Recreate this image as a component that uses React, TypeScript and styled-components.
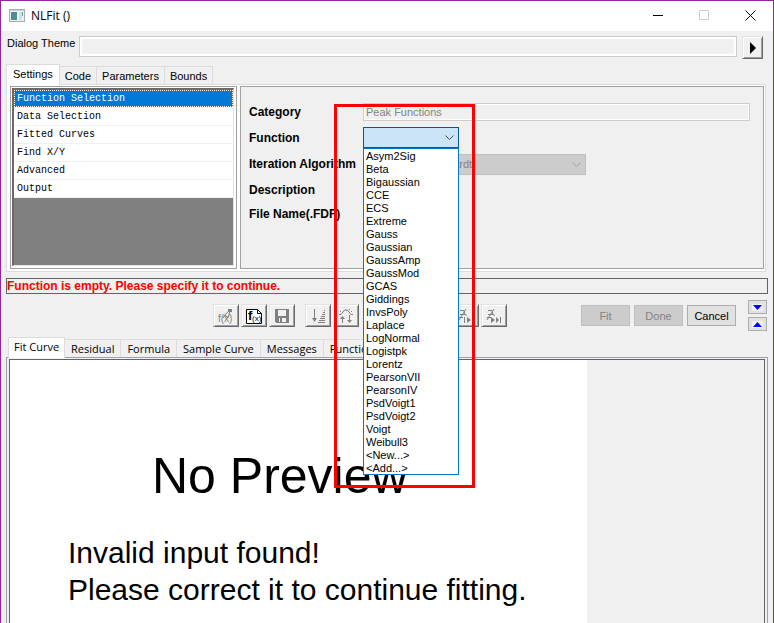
import React, { useState } from 'react';
import styled, { createGlobalStyle, css } from 'styled-components';

const GlobalStyle = createGlobalStyle`
  * { box-sizing: border-box; }
  body {
    margin: 0;
    background: #f0f0f0;
    overflow: hidden;
  }
  button, input, select {
    font: inherit;
    color: inherit;
    margin: 0;
    padding: 0;
    border-radius: 0;
  }
  ul { margin: 0; padding: 0; list-style: none; }
`;

const Window = styled.main`
  display: flex;
  flex-direction: column;
  min-height: 100vh;
  border: 1px solid #90279a;
  border-bottom: 0;
  background: #f0f0f0;
  color: #000;
  font: 11px/14px 'Liberation Sans', Arial, sans-serif;
`;

const TitleBar = styled.header`
  display: flex;
  align-items: center;
  height: 30px;
  padding: 0 11px 0 8px;
  background: #fff;
`;

const Title = styled.h1`
  flex: 1;
  margin: 0 0 0 6px;
  font: 12px/16px 'Open Sans', 'Noto Sans', sans-serif;
`;

const WindowButtons = styled.div`
  display: flex;
  gap: 23px;
`;

const WindowButton = styled.button`
  display: grid;
  place-items: center;
  width: 23px;
  height: 26px;
  padding-bottom: 2px;
  border: 0;
  background: none;
`;

const ThemeRow = styled.div`
  display: flex;
  align-items: flex-start;
  padding: 5px 10px 5px 6px;
`;

const ThemeLabel = styled.label`
  width: 72px;
  white-space: nowrap;
`;

const readOnlyBox = css`
  border: 1px solid #ccc;
  background: #f0f0f0;
  box-shadow: inset 0 0 0 1px #fff;
`;

const ThemeInput = styled.input`
  ${readOnlyBox}
  flex: 1;
  min-width: 0;
  height: 21px;
  box-shadow: inset 0 0 0 2px #fff;
`;

const raised = css`
  display: grid;
  place-items: center;
  border: 1px solid;
  border-color: #e3e3e3 #696969 #696969 #e3e3e3;
  background: #f0f0f0;
  box-shadow: inset 1px 1px 0 #fff, inset -1px -1px 0 #a0a0a0;
`;

const ThemeButton = styled.button`
  ${raised}
  width: 21px;
  height: 23px;
  margin-left: 5px;
`;

const Tabs = styled.div<{ $font?: string; $indent: number }>`
  display: flex;
  align-items: flex-end;
  position: relative;
  z-index: 1;
  padding-left: ${(p) => p.$indent}px;
  ${(p) => p.$font && css`font-family: ${p.$font};`}
`;

const Tab = styled.button<{ $active?: boolean; $pad: number }>`
  height: ${(p) => (p.$active ? 21 : 18)}px;
  padding: 0 ${(p) => p.$pad}px ${(p) => (p.$active ? 2 : 0)}px;
  border: 1px solid #dcdcdc;
  border-left-width: ${(p) => (p.$active ? 1 : 0)}px;
  border-bottom: 0;
  background: ${(p) => (p.$active ? '#fff' : '#f0f0f0')};
  margin-bottom: ${(p) => (p.$active ? -1 : 0)}px;
  white-space: nowrap;
`;

const SettingsPanel = styled.section`
  display: flex;
  gap: 3px;
  min-height: 188px;
  margin: 0 7px 0 5px;
  padding: 1px 1px 2px 3px;
  border: 1px solid #dcdcdc;
  background: #fff;
`;

const PageListFrame = styled.div`
  display: flex;
  flex: 0 0 227px;
  padding: 1px 2px 2px 1px;
  border: 1px solid #a0a0a0;
  background: #fff;
`;

const PageList = styled.ul`
  flex: 1;
  border: 1px solid #e3e3e3;
  border-width: 2px 1px 1px 2px;
  border-color: #696969 #e3e3e3 #e3e3e3 #696969;
  background: #808080;
  font: 10px/16px 'Liberation Mono', monospace;
`;

const PageItem = styled.li`
  height: 18px;
  border-bottom: 1px solid #f0f0f0;
  background: #fff;
`;

const PageButton = styled.button<{ $active?: boolean }>`
  display: block;
  width: 100%;
  height: 17px;
  padding-left: 2px;
  border: 1px dotted ${(p) => (p.$active ? '#fff' : 'transparent')};
  background: ${(p) => (p.$active ? '#0078d7' : '#fff')};
  color: ${(p) => (p.$active ? '#fff' : '#000')};
  text-align: left;
`;

const FormPanel = styled.div`
  flex: 1;
  display: grid;
  grid-template-columns: 114px 1fr;
  grid-template-rows: 24px 27px 26px 26px 22px;
  align-items: center;
  padding: 13px 13px 0 8px;
  border: 1px solid #a0a0a0;
  background: #f0f0f0;
`;

const bold = css`
  font-weight: bold;
  font-size: 12px;
  white-space: nowrap;
`;

const FieldLabel = styled.label`
  ${bold}
`;

const CategoryInput = styled.input`
  ${readOnlyBox}
  width: 100%;
  height: 18px;
  padding: 0 2px;
  color: #838383;
`;

const ComboBox = styled.div<{ $width: number }>`
  position: relative;
  width: ${(p) => p.$width}px;
`;

const Select = styled.select`
  display: block;
  appearance: none;
  width: 100%;
  height: 21px;
  padding: 0 3px;
  border: 1px solid #0055a8;
  background: #cce4f7;
  outline: 0;
  &:disabled {
    border-color: #bfbfbf;
    background: #ccc;
    color: #838383;
    opacity: 1;
  }
`;

const Chevron = styled.svg`
  position: absolute;
  right: 4px;
  top: 8px;
  pointer-events: none;
`;

const Menu = styled.ul`
  position: absolute;
  z-index: 3;
  top: 100%;
  left: 0;
  width: 100%;
  border: 1px solid #0078d7;
  background: #fff;
  line-height: 15px;
`;

const MenuItem = styled.li`
  height: 13px;
  padding-left: 2px;
  cursor: default;
`;

const Highlight = styled.div`
  position: absolute;
  z-index: 4;
  top: -23px;
  left: -29px;
  width: 141px;
  height: 384px;
  border: 3px solid #f00;
  pointer-events: none;
`;

const Status = styled.p`
  ${bold}
  height: 16px;
  margin: 6px 5px 0;
  border: 1px solid #646464;
  color: #f00;
`;

const ActionRow = styled.div`
  display: flex;
  align-items: center;
  justify-content: space-between;
  margin: 6px 6px 6px 212px;
`;

const Group = styled.div<{ $gap: number }>`
  display: flex;
  align-items: center;
  gap: ${(p) => p.$gap}px;
`;

const ToolButton = styled.button`
  ${raised}
  width: 26px;
  height: 23px;
  color: #808080;
`;

const ToolText = styled.text`
  font-family: 'Liberation Sans', sans-serif;
  fill: currentColor;
`;

const PushButton = styled.button`
  width: 49px;
  height: 21px;
  border: 1px solid #adadad;
  background: #e1e1e1;
  &:disabled {
    border-color: #bfbfbf;
    background: #ccc;
    color: #838383;
  }
`;

const ArrowStack = styled.div`
  display: grid;
  gap: 3px;
  margin-left: 8px;
`;

const ArrowButton = styled.button`
  display: grid;
  place-items: center;
  width: 19px;
  height: 14px;
  border: 1px solid #adadad;
  background: #e1e1e1;
`;

const PreviewOuter = styled.section`
  flex: 1;
  display: flex;
  margin: 0 5px;
  padding: 1px 2px 0;
  border: 1px solid #a0a0a8;
  border-bottom: 0;
  background: #f0f0f4;
`;

const PreviewInner = styled.div`
  flex: 1;
  border: 1px solid #646464;
  border-bottom: 0;
  background: #f0f0f0;
  display: flex;
`;

const PreviewPage = styled.div`
  flex: 0 1 577px;
  padding: 86px 0 0 58px;
  background: #fff;
`;

const PreviewTitle = styled.h2`
  margin: 0 0 28px 84px;
  font-size: 50px;
  line-height: 60px;
  font-weight: normal;
  white-space: nowrap;
`;

const PreviewText = styled.p`
  margin: 0;
  font-size: 30px;
  line-height: 37px;
  white-space: nowrap;
`;

const FUNCTIONS = [
  'Asym2Sig', 'Beta', 'Bigaussian', 'CCE', 'ECS', 'Extreme', 'Gauss', 'Gaussian', 'GaussAmp',
  'GaussMod', 'GCAS', 'Giddings', 'InvsPoly', 'Laplace', 'LogNormal', 'Logistpk', 'Lorentz',
  'PearsonVII', 'PearsonIV', 'PsdVoigt1', 'PsdVoigt2', 'Voigt', 'Weibull3', '<New...>', '<Add...>',
];
const PAGES = ['Function Selection', 'Data Selection', 'Fitted Curves', 'Find X/Y', 'Advanced', 'Output'];
const SETTINGS_TABS = ['Settings', 'Code', 'Parameters', 'Bounds'];
const PREVIEW_TABS = ['Fit Curve', 'Residual', 'Formula', 'Sample Curve', 'Messages', 'Function'];

const Arrow = ({ color }: { color: string }) => (
  <Chevron width="11" height="6" viewBox="0 0 11 6" fill="none" stroke={color}>
    <path d="M1.5 .5 5.5 4.5 9.5 .5" />
  </Chevron>
);

const AppIcon = () => (
  <svg width="16" height="14" viewBox="0 0 16 14" shapeRendering="crispEdges">
    <rect x=".5" y=".5" width="15" height="12" fill="#eef1f4" stroke="#a3abb5" />
    <rect x="1" y="1" width="14" height="1" fill="#c9d2dc" />
    <rect x="2" y="3" width="6" height="8" fill="#4f8f94" />
    <rect x="2" y="3" width="3" height="8" fill="#5b83a8" />
    <rect x="4" y="5" width="3" height="4" fill="#3f9b78" />
    <rect x="10" y="3" width="3" height="8" fill="#d5dde5" />
    <rect x="13" y="3" width="1" height="4" fill="#6aa88c" />
  </svg>
);

const NewFunctionIcon = () => (
  <svg width="16" height="16" viewBox="0 0 16 16" fill="none" stroke="currentColor">
    <ToolText x="0" y="14" fontSize="10" stroke="none">f(x)</ToolText>
    <path d="M5 10 7 6.500 11 3M7 7l3 3 2-7" />
    <path d="M10 1h4v3h-4z" fill="currentColor" stroke="none" />
  </svg>
);

const EditFunctionIcon = () => (
  <svg width="16" height="16" viewBox="0 0 16 16" fill="none" stroke="#000">
    <path d="M.5 1.500h11l4 4v10H.5z" fill="#fff" />
    <path d="M11.500 1.500v4h4" />
    <g color="#000">
      <ToolText x="2" y="12" fontSize="13" fontWeight="bold" stroke="none">f</ToolText>
      <ToolText x="6" y="13" fontSize="8" stroke="none">(x)</ToolText>
    </g>
  </svg>
);

const SaveIcon = () => (
  <svg width="16" height="16" viewBox="0 0 16 16" shapeRendering="crispEdges">
    <path d="M1 1h14v14H2l-1-1z" fill="currentColor" />
    <rect x="4" y="2" width="8" height="6" fill="#f0f0f0" />
    <rect x="5" y="10" width="7" height="4" fill="#f0f0f0" />
    <rect x="6" y="10" width="2" height="4" fill="currentColor" />
  </svg>
);

const SortIcon = () => (
  <svg width="16" height="16" viewBox="0 0 16 16" stroke="currentColor">
    <path d="M4.500 1v12M14 2.500h1M13 4.500h2M12 6.500h3M11 8.500h4M10 10.500h5M9 12.500h6M8 14.500h7" />
    <path d="M2 10h5l-2.500 4z" fill="currentColor" stroke="none" />
  </svg>
);

const SwapIcon = () => (
  <svg width="16" height="16" viewBox="0 0 16 16" fill="none" stroke="currentColor">
    <path d="M1 6.500h2L7 1.500 9 3M9 1.500l4 5h2" />
    <path d="M2 3.500h2M11 1.500h2M13 3.500h2" strokeDasharray="1 1" />
    <path d="M4.500 15V9M11.500 7v7" />
    <path d="M2 11l2.500-3L7 11zM9 12l2.500 3L14 12z" fill="currentColor" stroke="none" />
  </svg>
);

const StepIcon = ({ all }: { all?: boolean }) => (
  <svg width="16" height="16" viewBox="0 0 16 16" fill="none" stroke="currentColor">
    <path d="M1 12 8 1M2 2.500h4l1 4 2 1M2 6.500h5M1 9.500h4" />
    <path d={all ? 'M5 9l4 3-4 3zM10 9l3 3-3 3z' : 'M9 9l4 3-4 3z'} fill="currentColor" stroke="none" />
    <path d={all ? 'M14.500 9v6' : 'M6.500 9v6M14.500 9v6'} />
  </svg>
);

const BarsIcon = () => (
  <svg width="16" height="16" viewBox="0 0 16 16" fill="none" stroke="currentColor">
    <path d="M2.500 1v12.500H15M4 12l3-6 3 3 4-6" />
  </svg>
);

const TOOL_GROUPS: { name: string; icon: React.ReactNode }[][] = [
  [
    { name: 'New function', icon: <NewFunctionIcon /> },
    { name: 'Edit function', icon: <EditFunctionIcon /> },
    { name: 'Save', icon: <SaveIcon /> },
  ],
  [
    { name: 'Sort parameters', icon: <SortIcon /> },
    { name: 'Swap peaks', icon: <SwapIcon /> },
  ],
  [
    { name: 'Initialize', icon: <BarsIcon /> },
    { name: 'Simplex', icon: <BarsIcon /> },
    { name: 'Chi-square', icon: <BarsIcon /> },
    { name: 'One iteration', icon: <StepIcon /> },
    { name: 'Fit until converged', icon: <StepIcon all /> },
  ],
];

export default function App() {
  const [open, setOpen] = useState(true);
  const [fn, setFn] = useState('');
  const [page, setPage] = useState(PAGES[0]);

  return (
    <>
      <GlobalStyle />
      <Window>
        <TitleBar>
          <AppIcon />
          <Title>NLFit ()</Title>
          <WindowButtons>
            <WindowButton aria-label="Minimize">
              <svg width="11" height="11" viewBox="0 0 11 11"><path d="M0 5.500h10" stroke="#000" /></svg>
            </WindowButton>
            <WindowButton aria-label="Maximize" disabled>
              <svg width="11" height="11" viewBox="0 0 11 11"><path d="M.5.5h9v9h-9z" fill="none" stroke="#ccc" /></svg>
            </WindowButton>
            <WindowButton aria-label="Close">
              <svg width="11" height="11" viewBox="0 0 11 11"><path d="M.5.5l10 10M10.500.5l-10 10" stroke="#000" /></svg>
            </WindowButton>
          </WindowButtons>
        </TitleBar>

        <ThemeRow>
          <ThemeLabel htmlFor="theme">Dialog Theme</ThemeLabel>
          <ThemeInput id="theme" readOnly />
          <ThemeButton aria-label="Theme menu">
            <svg width="7" height="12" viewBox="0 0 7 12"><path d="M1 0l6 6-6 6z" /></svg>
          </ThemeButton>
        </ThemeRow>

        <Tabs role="tablist" $indent={5}>
          {SETTINGS_TABS.map((t, i) => (
            <Tab key={t} role="tab" aria-selected={i === 0} $active={i === 0} $pad={i === 0 ? 6 : 5}>{t}</Tab>
          ))}
        </Tabs>
        <SettingsPanel>
          <PageListFrame>
            <PageList>
              {PAGES.map((p) => (
                <PageItem key={p}>
                  <PageButton $active={p === page} onClick={() => setPage(p)}>{p}</PageButton>
                </PageItem>
              ))}
            </PageList>
          </PageListFrame>
          <FormPanel>
            <FieldLabel htmlFor="category">Category</FieldLabel>
            <CategoryInput id="category" readOnly value="Peak Functions" />
            <FieldLabel htmlFor="function">Function</FieldLabel>
            <ComboBox $width={96}>
              <Select
                id="function"
                value={fn}
                onChange={(e) => setFn(e.target.value)}
                onMouseDown={(e) => {
                  e.preventDefault();
                  setOpen(!open);
                }}
              >
                <option value="" />
                {FUNCTIONS.map((f) => <option key={f}>{f}</option>)}
              </Select>
              <Arrow color="#505050" />
              {open && (
                <Menu role="listbox" aria-label="Function">
                  {FUNCTIONS.map((f) => (
                    <MenuItem
                      key={f}
                      role="option"
                      aria-selected={f === fn}
                      onClick={() => {
                        setFn(f);
                        setOpen(false);
                      }}
                    >
                      {f}
                    </MenuItem>
                  ))}
                </Menu>
              )}
              <Highlight />
            </ComboBox>
            <FieldLabel htmlFor="algorithm">Iteration Algorithm</FieldLabel>
            <ComboBox $width={223}>
              <Select id="algorithm" disabled>
                <option>Levenberg Marquardt</option>
              </Select>
              <Arrow color="#a0a0a0" />
            </ComboBox>
            <FieldLabel as="span">Description</FieldLabel>
            <span />
            <FieldLabel as="span">File Name(.FDF)</FieldLabel>
            <span />
          </FormPanel>
        </SettingsPanel>

        <Status role="status">Function is empty. Please specify it to continue.</Status>

        <ActionRow>
          <Group $gap={10}>
            {TOOL_GROUPS.map((group, i) => (
              <Group key={i} $gap={2}>
                {group.map((t) => <ToolButton key={t.name} aria-label={t.name}>{t.icon}</ToolButton>)}
              </Group>
            ))}
          </Group>
          <Group $gap={4}>
            <PushButton disabled>Fit</PushButton>
            <PushButton disabled>Done</PushButton>
            <PushButton>Cancel</PushButton>
            <ArrowStack>
              <ArrowButton aria-label="Expand">
                <svg width="11" height="7" viewBox="0 0 11 7"><path d="M0 0h11v7H0z" fill="#f0f0f0" /><path d="M1 1h9L5.500 6z" fill="#00f" /></svg>
              </ArrowButton>
              <ArrowButton aria-label="Collapse">
                <svg width="11" height="7" viewBox="0 0 11 7"><path d="M0 0h11v7H0z" fill="#f0f0f0" /><path d="M1 6h9L5.500 1z" fill="#00f" /></svg>
              </ArrowButton>
            </ArrowStack>
          </Group>
        </ActionRow>

        <Tabs role="tablist" $indent={7} $font="'Open Sans', 'Noto Sans', sans-serif">
          {PREVIEW_TABS.map((t, i) => (
            <Tab key={t} role="tab" aria-selected={i === 0} $active={i === 0} $pad={i === 0 ? 5 : 6}>{t}</Tab>
          ))}
        </Tabs>
        <PreviewOuter>
          <PreviewInner>
            <PreviewPage>
              <PreviewTitle>No Preview</PreviewTitle>
              <PreviewText>Invalid input found!</PreviewText>
              <PreviewText>Please correct it to continue fitting.</PreviewText>
            </PreviewPage>
          </PreviewInner>
        </PreviewOuter>
      </Window>
    </>
  );
}
